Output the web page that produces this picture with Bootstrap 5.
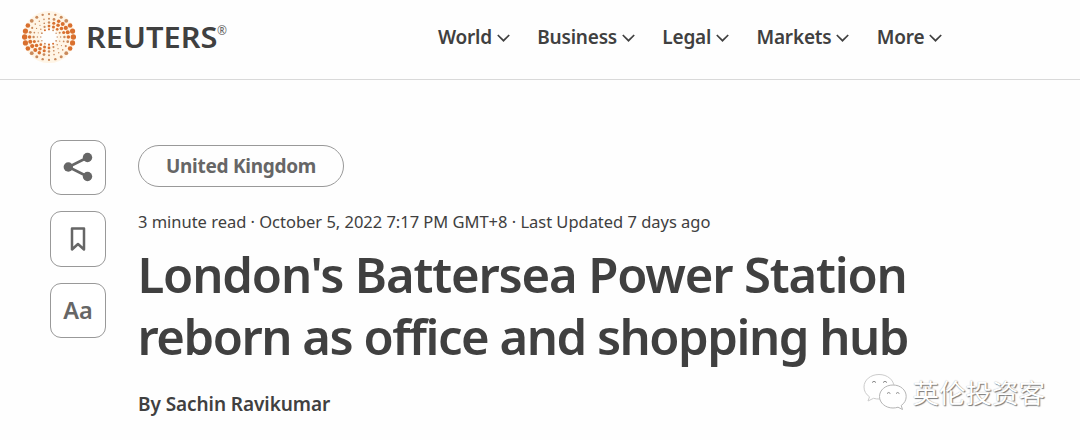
<!DOCTYPE html>
<html lang="en">
<head>
    <meta charset="UTF-8">
    <meta name="viewport" content="width=device-width, initial-scale=1.0">
    <link href="https://cdn.jsdelivr.net/npm/bootstrap@5.3.0/dist/css/bootstrap.min.css" rel="stylesheet">
    <script defer src="https://cdn.jsdelivr.net/npm/bootstrap@5.3.0/dist/js/bootstrap.bundle.min.js"></script>
    <title>London's Battersea Power Station reborn as office and shopping hub</title>
    <style>
        body {
            font-family: "Noto Sans", "Open Sans", sans-serif;
            color: #404040;
            background-color: #fefefe;
            overflow: hidden;
        }

        /* header */
        .site-header {
            height: 80px;
            padding: 0 0 5px 22px;
            border-bottom: 1px solid #d9d9d9;
        }

        .brand {
            margin-left: 10px;
        }

        .brand-name {
            width: 129px;
            font-size: 28px;
            font-weight: 600;
            line-height: 40px;
            transform: scaleX(1.1);
            transform-origin: left;
        }

        .brand-reg {
            font-size: 12px;
            line-height: 12px;
            margin: 0 0 12px 2px;
            color: #666;
        }

        .main-nav {
            gap: 27.3px;
            margin-left: 211px;
        }

        .main-nav .nav-link {
            gap: 5px;
            font-size: 19px;
            font-weight: 600;
            line-height: 28px;
            letter-spacing: -0.2px;
            color: #404040;
        }

        .main-nav svg {
            margin-top: 1px;
        }

        /* article */
        .article {
            padding: 59px 0 0 50px;
            gap: 32px;
        }

        .tools {
            gap: 16px;
            padding-top: 0.5px;
        }

        .tool-btn {
            width: 56px;
            height: 55.6px;
            border: 1px solid #999;
            border-radius: 11px;
            background: #fff;
            color: #666;
            font-size: 23.5px;
            font-weight: 600;
            line-height: 1;
        }

        .topic {
            width: 206px;
            height: 42px;
            margin-top: 6px;
            border: 1px solid #999;
            color: #666;
            font-size: 19px;
            font-weight: 700;
            letter-spacing: -0.27px;
        }

        .meta {
            font-size: 16.5px;
            line-height: 24px;
            letter-spacing: -0.02px;
            margin: 23px 0 0;
        }

        .headline {
            font-size: 49px;
            font-weight: 600;
            line-height: 61.5px;
            letter-spacing: -1.15px;
            margin: 10px 0 0 -0.5px;
            white-space: nowrap;
        }

        .headline .tight {
            letter-spacing: -1.48px;
        }

        .byline {
            font-size: 19px;
            font-weight: 600;
            line-height: 28px;
            letter-spacing: -0.07px;
            margin: 23px 0 0;
        }

        /* account watermark over the page */
        .watermark {
            right: 35px;
            bottom: 28px;
            gap: 6px;
            font-family: "Noto Sans CJK SC", sans-serif;
            font-size: 26.5px;
            font-weight: 400;
            line-height: 40px;
            color: #fff;
            text-shadow: 1px 1px 1px #777, 0 0 1px #aaa;
        }
    </style>
</head>
<body>
    <header class="site-header d-flex align-items-center">
        <svg id="brandDots" width="54" height="54" viewBox="-27 -27 54 54"></svg>
        <div class="brand d-flex align-items-center">
            <span class="brand-name">REUTERS</span>
            <span class="brand-reg">®</span>
        </div>
        <nav class="main-nav nav flex-nowrap">
            <a class="nav-link d-flex align-items-center p-0" href="#">World
                <svg width="13" height="8" viewBox="0 0 13 8" fill="none" stroke="currentColor" stroke-width="1.7"><path d="M.8 1l5.700 5.700L12.200 1"/></svg></a>
            <a class="nav-link d-flex align-items-center p-0" href="#">Business
                <svg width="13" height="8" viewBox="0 0 13 8" fill="none" stroke="currentColor" stroke-width="1.7"><path d="M.8 1l5.700 5.700L12.200 1"/></svg></a>
            <a class="nav-link d-flex align-items-center p-0" href="#">Legal
                <svg width="13" height="8" viewBox="0 0 13 8" fill="none" stroke="currentColor" stroke-width="1.7"><path d="M.8 1l5.700 5.700L12.200 1"/></svg></a>
            <a class="nav-link d-flex align-items-center p-0" href="#">Markets
                <svg width="13" height="8" viewBox="0 0 13 8" fill="none" stroke="currentColor" stroke-width="1.7"><path d="M.8 1l5.700 5.700L12.200 1"/></svg></a>
            <a class="nav-link d-flex align-items-center p-0" href="#">More
                <svg width="13" height="8" viewBox="0 0 13 8" fill="none" stroke="currentColor" stroke-width="1.7"><path d="M.8 1l5.700 5.700L12.200 1"/></svg></a>
        </nav>
    </header>

    <main class="article d-flex align-items-start">
        <div class="tools d-flex flex-column">
            <button class="tool-btn d-flex align-items-center justify-content-center p-0" aria-label="Share">
                <svg width="30" height="30" viewBox="0 0 30 30" fill="currentColor">
                    <path d="M24.500 5.500L5.500 15l19 9.500" fill="none" stroke="currentColor" stroke-width="2.600"/>
                    <circle cx="24.500" cy="5.500" r="4.700"/><circle cx="5.300" cy="15" r="4.700"/><circle cx="24.500" cy="24.500" r="4.700"/>
                </svg>
            </button>
            <button class="tool-btn d-flex align-items-center justify-content-center p-0" aria-label="Save">
                <svg width="16" height="24" viewBox="0 0 16 24" fill="none" stroke="currentColor" stroke-width="2.500" stroke-linejoin="round">
                    <path d="M2 1.500h12v21l-6-5.500-6 5.500z"/>
                </svg>
            </button>
            <button class="tool-btn d-flex align-items-center justify-content-center p-0">Aa</button>
        </div>
        <div>
            <a class="topic d-flex align-items-center justify-content-center rounded-pill text-decoration-none" href="#">United Kingdom</a>
            <p class="meta">3 minute read · October 5, 2022 7:17 PM GMT+8 · Last Updated 7 days ago</p>
            <h1 class="headline">London's Battersea Power Station<br><span class="tight">reborn as office and shopping hub</span></h1>
            <p class="byline">By Sachin Ravikumar</p>
        </div>
    </main>

    <div class="watermark position-absolute d-flex align-items-center">
        <svg width="44" height="38" viewBox="0 0 44 38" fill="#fff" stroke="#b5b5b5" stroke-width="1">
            <path d="M16 1.500C7.500 1.500 1 7 1 14c0 4 2 7.500 5.500 9.800L5 28l5.500-2.700c2 .6 4 .7 6 .7 8 0 14.500-5.500 14.500-12.200S24.500 1.500 16 1.500z" stroke="#ccc"/>
            <path d="M30 12c-7.500 0-13.500 5-13.500 11.500S22.500 35 30 35c1.800 0 3.500-.3 5-.8l4.500 2.300-1.300-4c3.200-2.200 5-5.300 5-9C43.200 17 37.500 12 30 12z"/>
            <path d="M9 9.500q2-2.500 4 0M20 9.500q2-2.500 4 0M24 20.500q1.700-2 3.400 0M33 20.500q1.700-2 3.400 0" fill="none" stroke="#888"/>
        </svg>
        <span lang="zh">英伦投资客</span>
    </div>
</body>
<script>
    // logo: rings of dots, the heavy part of each ring turns a little further round
    const rings = [
        { r: 24.4, n: 24, min: 1.1, max: 2.7, turn: 0 },
        { r: 19.4, n: 24, min: 0.7, max: 2.1, turn: -30 },
        { r: 15.4, n: 20, min: 0.6, max: 1.8, turn: -45 },
        { r: 11.6, n: 16, min: 0.6, max: 1.5, turn: -70 },
        { r: 8.2, n: 12, min: 0.7, max: 1.1, turn: -100 }
    ];
    let dots = '<circle r="17.5" fill="none" stroke="#fff5e6" stroke-width="17"/>';
    rings.forEach(function (ring) {
        for (let i = 0; i < ring.n; i++) {
            const a = i * 2 * Math.PI / ring.n;
            const k = Math.pow(Math.cos(a - ring.turn * Math.PI / 180), 2);
            const size = ring.min + (ring.max - ring.min) * k;
            const color = k > 0.6 ? '#d9702f' : '#c98a5c';
            dots += `<circle cx="${(ring.r * Math.cos(a)).toFixed(2)}" cy="${(ring.r * 0.94 * Math.sin(a)).toFixed(2)}" r="${size.toFixed(2)}" fill="${color}"/>`;
        }
    });
    document.getElementById('brandDots').innerHTML = dots;
</script>
</html>
